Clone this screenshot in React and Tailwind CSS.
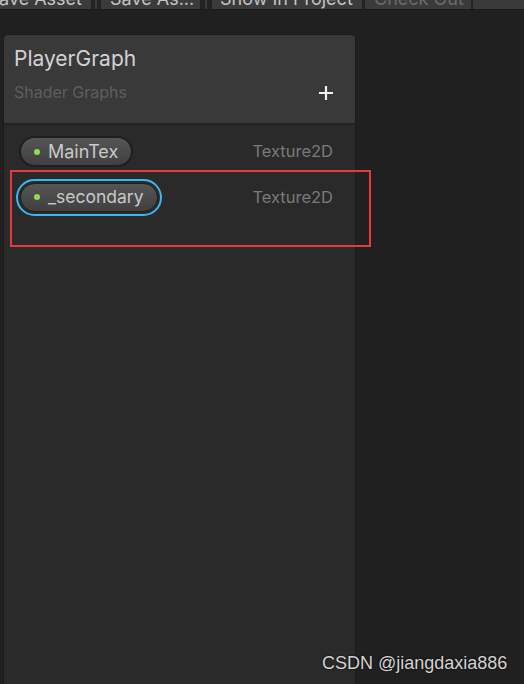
export default function App() {
  const font = { fontFamily: "Inter, 'Noto Sans', sans-serif" };
  return (
    <div className="relative w-[524px] h-[684px] overflow-hidden bg-[#202020]" style={font}>
      {/* top toolbar, cut off */}
      <div className="flex h-[10px] bg-[#232323] border-b border-[#1a1a1a]">
        <div className="w-[91px] bg-[#3b3b3b] overflow-hidden text-[18px] leading-[20px] text-[#c4c4c4] flex items-start justify-end pr-[9px]">
          <span className="-mt-[11px] whitespace-nowrap">ave Asset</span>
        </div>
        <div className="w-[10px] flex justify-center"><div className="w-[2px] bg-[#3b3b3b]" /></div>
        <div className="w-[99px] bg-[#3b3b3b] overflow-hidden text-[18px] leading-[20px] text-[#c4c4c4] flex items-start pl-[9px]">
          <span className="-mt-[11px] whitespace-nowrap">Save As...</span>
        </div>
        <div className="w-[12px] flex justify-center"><div className="w-[2px] bg-[#3b3b3b]" /></div>
        <div className="w-[150px] bg-[#3b3b3b] overflow-hidden text-[18px] leading-[20px] text-[#c4c4c4] flex items-start pl-[8px]">
          <span className="-mt-[11px] whitespace-nowrap">Show In Project</span>
        </div>
        <div className="w-[3px]" />
        <div className="w-[106px] bg-[#3b3b3b] overflow-hidden text-[18px] leading-[20px] text-[#6a6a6a] flex items-start pl-[9px]">
          <span className="-mt-[11px] whitespace-nowrap">Check Out</span>
        </div>
        <div className="w-[2px]" />
        <div className="flex-1 bg-[#3a3a3a]" />
      </div>

      {/* blackboard panel */}
      <div className="ml-[3px] mt-[24px] w-[353px] h-[700px] rounded-t-[5px] border border-[#1b1b1b] bg-[#2a2a2a] overflow-hidden">
        <div className="h-[90px] bg-[#393939] border-b-2 border-[#232323] px-[10px] pt-[10px] relative">
          <div className="text-[21px] leading-[28px] text-[#d2d2d2]">PlayerGraph</div>
          <div className="mt-[8px] flex items-center justify-between">
            <span className="text-[16px] leading-[22px] text-[#5e5e5e]">Shader Graphs</span>
            <svg width="16" height="16" viewBox="0 0 16 16" className="mr-[11px] mt-[1px]">
              <path d="M8 1v14M1 8h14" stroke="#f0f0f0" strokeWidth="2.2" />
            </svg>
          </div>
        </div>

        <div className="flex flex-col pt-[10px]">
          <div className="flex items-center justify-between pl-[15px] pr-[22px] h-[33px]">
            <div className="h-[31px] px-[13px] flex items-center gap-[8px] rounded-full border-2 border-[#1e1e1e] bg-gradient-to-b from-[#555555] to-[#404040]">
              <span className="w-[6px] h-[6px] rounded-full bg-[#8fdc4c]" />
              <span className="text-[18px] leading-[20px] text-[#c9c9c9]">MainTex</span>
            </div>
            <span className="text-[16.5px] text-[#7a7a7a]">Texture2D</span>
          </div>
          <div className="flex items-center justify-between pl-[12px] pr-[22px] h-[36px] mt-[11px]">
            <div className="h-[37px] p-[2px] rounded-full border-2 border-[#3cb6f2]">
              <div className="h-full px-[13px] flex items-center gap-[8px] rounded-full border border-[#1e1e1e] bg-gradient-to-b from-[#555555] to-[#404040]">
                <span className="w-[6px] h-[6px] rounded-full bg-[#8fdc4c]" />
                <span className="text-[17.5px] leading-[20px] text-[#c9c9c9]">_secondary</span>
              </div>
            </div>
            <span className="text-[16.5px] text-[#7a7a7a]">Texture2D</span>
          </div>
        </div>
      </div>

      {/* annotation box */}
      <div className="absolute left-[10px] top-[170px] w-[361px] h-[77px] border-2 border-[#e83a3a]" />

      {/* watermark */}
      <div className="absolute left-[322px] top-[652px] text-[18px] leading-[22px] text-[#d4d4d4] [text-shadow:0_0_2px_#000]" style={{ fontFamily: "'Liberation Sans', Arial, sans-serif" }}>
        CSDN @jiangdaxia886
      </div>
    </div>
  );
}
